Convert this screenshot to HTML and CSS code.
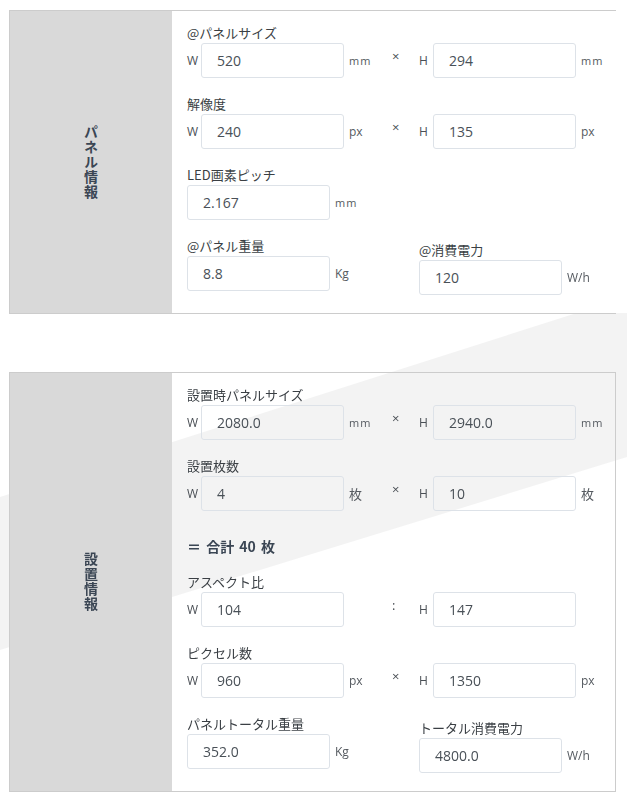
FILE: index.html
```html
<!DOCTYPE html>
<html lang="ja">

<head>
    <meta charset="UTF-8">
    <meta name="viewport" content="width=device-width, initial-scale=1.0">
    <title>パネル計算</title>
    <link rel="stylesheet" href="styles.css">
</head>

<body>
    <div class="card card-solid">
        <div class="card-head"><span class="v-title">パネル情報</span></div>
        <div class="card-body">
            <div class="field">
                <div class="field-label">@パネルサイズ</div>
                <div class="pair">
                    <span class="axis">W</span><input class="val" type="text" value="520"><span class="unit unit-mm">mm</span>
                    <span class="sep">×</span>
                    <span class="axis">H</span><input class="val" type="text" value="294"><span class="unit unit-mm">mm</span>
                </div>
            </div>
            <div class="field">
                <div class="field-label">解像度</div>
                <div class="pair">
                    <span class="axis">W</span><input class="val" type="text" value="240"><span class="unit">px</span>
                    <span class="sep">×</span>
                    <span class="axis">H</span><input class="val" type="text" value="135"><span class="unit">px</span>
                </div>
            </div>
            <div class="field">
                <div class="field-label">LED画素ピッチ</div>
                <div class="pair">
                    <input class="val" type="text" value="2.167"><span class="unit unit-mm">mm</span>
                </div>
            </div>
            <div class="cols">
                <div class="col">
                    <div class="field-label">@パネル重量</div>
                    <div class="pair">
                        <input class="val" type="text" value="8.8"><span class="unit">Kg</span>
                    </div>
                </div>
                <div class="col col-low">
                    <div class="field-label">@消費電力</div>
                    <div class="pair">
                        <input class="val" type="text" value="120"><span class="unit">W/h</span>
                    </div>
                </div>
            </div>
        </div>
    </div>

    <div class="card card-clear">
        <div class="card-head"><span class="v-title">設置情報</span></div>
        <div class="card-body">
            <div class="field">
                <div class="field-label">設置時パネルサイズ</div>
                <div class="pair">
                    <span class="axis">W</span><input class="val" type="text" value="2080.0" readonly><span class="unit unit-mm">mm</span>
                    <span class="sep">×</span>
                    <span class="axis">H</span><input class="val" type="text" value="2940.0" readonly><span class="unit unit-mm">mm</span>
                </div>
            </div>
            <div class="field">
                <div class="field-label">設置枚数</div>
                <div class="pair">
                    <span class="axis">W</span><input class="val" type="text" value="4"><span class="unit unit-jp">枚</span>
                    <span class="sep">×</span>
                    <span class="axis">H</span><input class="val" type="text" value="10"><span class="unit unit-jp">枚</span>
                </div>
            </div>
            <div class="total">＝&nbsp;合計&nbsp;40&nbsp;枚</div>
            <div class="field">
                <div class="field-label">アスペクト比</div>
                <div class="pair">
                    <span class="axis">W</span><input class="val" type="text" value="104" readonly><span class="unit"></span>
                    <span class="sep">:</span>
                    <span class="axis">H</span><input class="val" type="text" value="147" readonly>
                </div>
            </div>
            <div class="field">
                <div class="field-label">ピクセル数</div>
                <div class="pair">
                    <span class="axis">W</span><input class="val" type="text" value="960" readonly><span class="unit">px</span>
                    <span class="sep">×</span>
                    <span class="axis">H</span><input class="val" type="text" value="1350" readonly><span class="unit">px</span>
                </div>
            </div>
            <div class="cols">
                <div class="col">
                    <div class="field-label">パネルトータル重量</div>
                    <div class="pair">
                        <input class="val" type="text" value="352.0" readonly><span class="unit">Kg</span>
                    </div>
                </div>
                <div class="col col-low">
                    <div class="field-label">トータル消費電力</div>
                    <div class="pair">
                        <input class="val" type="text" value="4800.0" readonly><span class="unit">W/h</span>
                    </div>
                </div>
            </div>
        </div>
    </div>
</body>

</html>
```

FILE: styles.css
```css
/* ベース */
html {
    background: #ffffff;
}

body {
    margin: 0;
    padding: 10px 11px 10px 9px;
    font-family: 'Open Sans', 'Noto Sans CJK JP', sans-serif;
    color: #3a3f44;
    font-size: 14px;
}

/* 斜めの背景帯 */
body::before {
    content: "";
    position: fixed;
    top: 0;
    left: 0;
    width: 100%;
    height: 100%;
    background: #f3f3f3;
    clip-path: polygon(0 497px, 627px 297px, 627px 457px, 0 650px);
    z-index: -1;
}

.card {
    display: flex;
    width: 607px;
    border: 1px solid #cccccc;
    box-sizing: border-box;
}

.card + .card {
    margin-top: 58px;
}

.card-solid .card-body {
    background: #ffffff;
}

.card-clear .card-body,
.card-clear .val {
    background: transparent;
}

.card-head {
    width: 162px;
    flex-shrink: 0;
    background: #d9d9d9;
    display: flex;
    justify-content: center;
    align-items: center;
}

.v-title {
    writing-mode: vertical-rl;
    font-family: 'Noto Sans CJK JP', sans-serif;
    font-weight: bold;
    font-size: 14px;
    letter-spacing: 1px;
    color: #3b4654;
}

.card-body {
    flex: 1;
    padding: 12px 0 18px 15px;
}

.field {
    margin-bottom: 16px;
}

.field-label {
    height: 20px;
    line-height: 20px;
    font-family: 'Noto Sans CJK JP', sans-serif;
    font-size: 13px;
    color: #3a3f44;
}

.pair {
    display: flex;
    align-items: center;
}

.axis {
    width: 14px;
    flex-shrink: 0;
    font-size: 12px;
    color: #4a4f55;
}

.val {
    width: 143px;
    height: 35px;
    box-sizing: border-box;
    padding: 0 0 0 15px;
    border: 1px solid #dde2e8;
    border-radius: 3px;
    background: #ffffff;
    font-family: 'Open Sans', sans-serif;
    font-size: 14px;
    color: #495057;
    outline: none;
}

.unit {
    padding-left: 5px;
    font-size: 12px;
    color: #555a60;
}

.pair .axis + .val + .unit {
    width: 48px;
    flex-shrink: 0;
    box-sizing: border-box;
}

.unit-mm {
    font-size: 11px;
    letter-spacing: 1px;
}

.unit-jp {
    font-family: 'Noto Sans CJK JP', sans-serif;
    font-size: 13px;
}

.sep {
    width: 27px;
    flex-shrink: 0;
    margin-bottom: 10px;
    box-sizing: border-box;
    font-size: 13px;
    color: #4a4f55;
}

.total {
    padding-top: 9px;
    margin-bottom: 16px;
    line-height: 20px;
    font-family: 'Noto Sans CJK JP', sans-serif;
    font-weight: bold;
    font-size: 14px;
    word-spacing: 2px;
    color: #3b4654;
}

.cols {
    display: flex;
}

.col {
    width: 232px;
}

.col-low {
    margin-top: 4px;
}
```
